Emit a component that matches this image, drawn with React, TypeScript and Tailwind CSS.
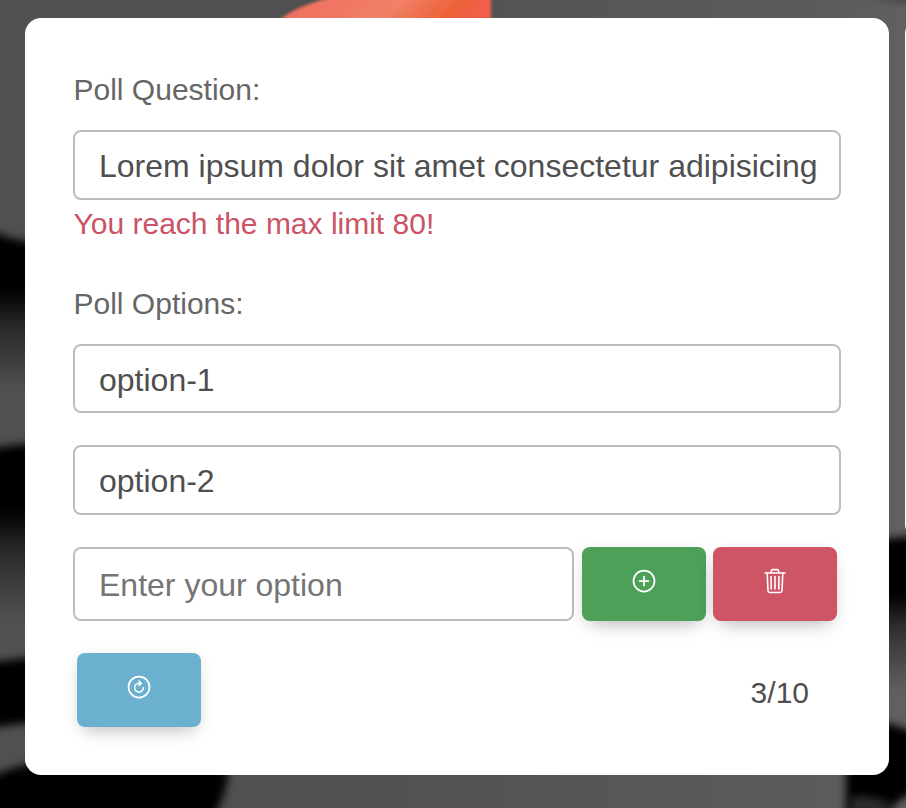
import { IoAddCircleOutline, IoRefreshCircleOutline } from 'react-icons/io5';
import type { ReactNode } from 'react';

const fieldClass =
  'block rounded-lg border-2 border-[#bdbdbd] bg-white pl-6 text-[32px] text-[#4f4f4f] outline-none placeholder:text-[#757575] placeholder:opacity-100';

function ActionButton({ color, label, children }: { color: string; label: string; children: ReactNode }) {
  return (
    <button
      aria-label={label}
      className={`flex h-[74px] w-[124px] items-center justify-center rounded-lg pb-[7px] text-[28px] text-white shadow-[0_2px_16px_0_rgba(0,0,0,0.06),0_10px_18px_-8px_rgba(0,0,0,0.25)] ${color}`}
    >
      {children}
    </button>
  );
}

function TrashIcon() {
  return (
    <svg
      className="h-[26px] w-[22px]"
      viewBox="0 0 22 26"
      fill="none"
      stroke="currentColor"
      strokeWidth="1.6"
      strokeLinecap="round"
      strokeLinejoin="round"
    >
      <path d="M1 5H21M7.3 5V3.2Q7.3 1.6 8.9 1.6H13.1Q14.7 1.6 14.7 3.2V5" />
      <path d="M3.2 5L4 22.8Q4.1 24.5 5.8 24.5H16.2Q17.9 24.5 18 22.8L18.8 5" />
      <path d="M7 8.6L7.2 21M11 8.6V21M15 8.6L14.8 21" />
    </svg>
  );
}

function Backdrop() {
  return (
    <svg className="absolute inset-0 h-full w-full" viewBox="0 0 906 808" preserveAspectRatio="none">
      <defs>
        <filter id="soft" x="-20%" y="-20%" width="140%" height="140%">
          <feGaussianBlur stdDeviation="4" />
        </filter>
        <filter id="edge" x="-20%" y="-20%" width="140%" height="140%">
          <feGaussianBlur stdDeviation="1.5" />
        </filter>
        <linearGradient id="base" x1="0" x2="1" y1="0" y2="0">
          <stop offset="0" stopColor="#505050" />
          <stop offset="0.35" stopColor="#515051" />
          <stop offset="0.9" stopColor="#5b5b5b" />
          <stop offset="1" stopColor="#606060" />
        </linearGradient>
        <linearGradient id="coral" x1="0" x2="1" y1="0" y2="0.15">
          <stop offset="0" stopColor="#f06a5c" />
          <stop offset="0.6" stopColor="#f08068" />
          <stop offset="0.88" stopColor="#ee6238" />
          <stop offset="1" stopColor="#f0604a" />
        </linearGradient>
        <linearGradient id="fade" x1="0" x2="0" y1="0" y2="1">
          <stop offset="0" stopColor="#000" />
          <stop offset="0.38" stopColor="#000" />
          <stop offset="0.6" stopColor="#000" stopOpacity="0.5" />
          <stop offset="1" stopColor="#000" stopOpacity="0" />
        </linearGradient>
      </defs>
      <rect width="906" height="808" fill="url(#base)" />
      <path d="M276 24C292 6 322 0 344-6H491V24Z" fill="url(#coral)" filter="url(#edge)" />
      <path d="M860-8H920V4Q890 6 860-8Z" fill="#4a4a4a" filter="url(#soft)" />
      <path d="M-12 228Q6 240 40 243V390H-12Z" fill="url(#fade)" filter="url(#soft)" />
      <path d="M-12 448Q10 446 40 442V620H-12Z" fill="url(#fade)" filter="url(#soft)" />
      <path d="M-12 663Q10 660 40 656V722Q10 724-12 729Z" fill="#000" filter="url(#soft)" />
      <path d="M-12 778Q10 767 40 762H228Q230 790 212 820H-12Z" fill="#000" filter="url(#soft)" />
      <path d="M876 540L920 535V690H876Z" fill="url(#fade)" filter="url(#soft)" />
      <path d="M846 820V764L876 720L920 733V790Q900 796 880 820Z" fill="#000" filter="url(#soft)" />
      <path d="M850 820V798Q868 792 890 804L885 820Z" fill="#2c2c2c" filter="url(#soft)" />
    </svg>
  );
}

export default function App() {
  return (
    <div className="relative h-[808px] w-[906px] overflow-hidden font-['Liberation_Sans',Arial,sans-serif]">
      <Backdrop />
      <div className="relative flex gap-4 pl-[25px] pt-[18px]">
        <main className="h-[757px] w-[864px] shrink-0 rounded-2xl bg-white px-12 pt-[50px]">
          <section className="flex flex-col">
            <label className="h-[62px] pl-[0.5px] text-[30px] leading-[43px] text-[#666]">Poll Question:</label>
            <input
              className={`h-[70px] w-[768px] pr-[20px] pb-px pt-[3px] ${fieldClass}`}
              defaultValue="Lorem ipsum dolor sit amet consectetur adipisicing"
            />
            <p className="h-[48px] pl-[0.5px] text-[30px] leading-[47px] text-[#cb5365]">You reach the max limit 80!</p>
          </section>

          <section className="mt-[34px] flex flex-col">
            <label className="h-[62px] pl-[0.5px] text-[30px] leading-[43px] text-[#666]">Poll Options:</label>
            <input className={`h-[69px] w-[768px] pt-[3px] ${fieldClass}`} defaultValue="option-1" />
            <input className={`mt-8 h-[70px] w-[768px] pt-[3px] ${fieldClass}`} defaultValue="option-2" />
            <div className="mt-8 flex">
              <input className={`h-[74px] w-[501px] pt-[3px] ${fieldClass}`} placeholder="Enter your option" />
              <div className="ml-2 flex gap-[7px]">
                <ActionButton color="bg-[#4da057]" label="Add option">
                  <IoAddCircleOutline />
                </ActionButton>
                <ActionButton color="bg-[#cd5565]" label="Remove option">
                  <TrashIcon />
                </ActionButton>
              </div>
            </div>
          </section>

          <footer className="mt-8 flex items-center justify-between pl-1 pr-8">
            <ActionButton color="bg-[#6bb1cf]" label="Reset poll">
              <IoRefreshCircleOutline />
            </ActionButton>
            <span className="pt-1 text-[30px] text-[#4f4f4f]">3/10</span>
          </footer>
        </main>
        <aside className="h-[522px] w-[864px] shrink-0 rounded-2xl bg-white" />
      </div>
    </div>
  );
}
